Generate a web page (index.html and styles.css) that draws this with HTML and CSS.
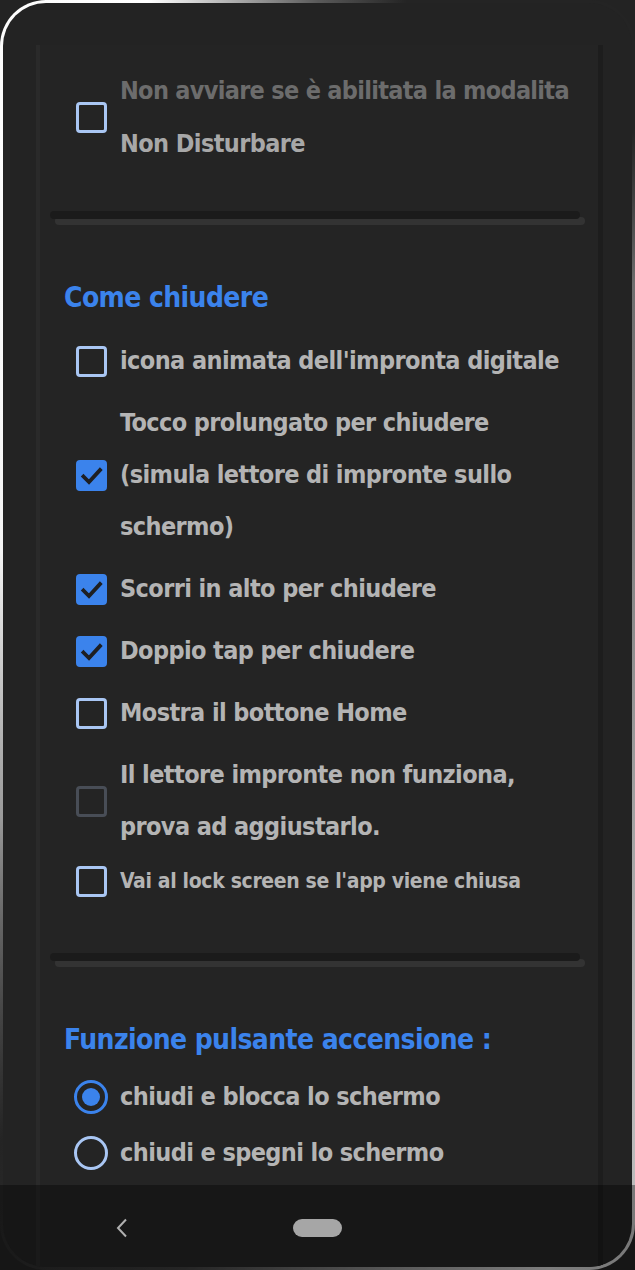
FILE: index.html
```html
<!DOCTYPE html>
<html lang="it">
<head>
<meta charset="utf-8">
<title>Impostazioni</title>
<link rel="stylesheet" href="styles.css">
</head>
<body>
<div class="device">
  <div class="screen">
    <div class="panel">
      <div class="row row--top">
        <span class="box"></span>
        <span class="label"><span class="dim">Non avviare se è abilitata la modalita</span><br>Non Disturbare</span>
      </div>

      <div class="divider"></div>

      <h2 class="title">Come chiudere</h2>
      <div class="options">
        <div class="row">
          <span class="box"></span>
          <span class="label">icona animata dell'impronta digitale</span>
        </div>
        <div class="row">
          <span class="box box--on"><svg viewBox="0 0 30 31" class="tick"><path d="M7 16.5 L12.5 22 L23.5 10"/></svg></span>
          <span class="label">Tocco prolungato per chiudere<br>(simula lettore di impronte sullo<br>schermo)</span>
        </div>
        <div class="row">
          <span class="box box--on"><svg viewBox="0 0 30 31" class="tick"><path d="M7 16.5 L12.5 22 L23.5 10"/></svg></span>
          <span class="label">Scorri in alto per chiudere</span>
        </div>
        <div class="row">
          <span class="box box--on"><svg viewBox="0 0 30 31" class="tick"><path d="M7 16.5 L12.5 22 L23.5 10"/></svg></span>
          <span class="label">Doppio tap per chiudere</span>
        </div>
        <div class="row">
          <span class="box"></span>
          <span class="label">Mostra il bottone Home</span>
        </div>
        <div class="row">
          <span class="box box--off"></span>
          <span class="label">Il lettore impronte non funziona,<br>prova ad aggiustarlo.</span>
        </div>
        <div class="row row--small">
          <span class="box"></span>
          <span class="label">Vai al lock screen se l'app viene chiusa</span>
        </div>
      </div>

      <div class="divider divider--second"></div>

      <h2 class="title">Funzione pulsante accensione :</h2>
      <div class="radios">
        <div class="radio-row">
          <span class="radio radio--on"><span class="dot"></span></span>
          <span class="label">chiudi e blocca lo schermo</span>
        </div>
        <div class="radio-row">
          <span class="radio"></span>
          <span class="label">chiudi e spegni lo schermo</span>
        </div>
      </div>
    </div>
  </div>
  <nav class="navbar">
    <svg class="back" viewBox="0 0 12 20"><path d="M10 1.5 L2 10 L10 18.5"/></svg>
    <span class="home-pill"></span>
  </nav>
</div>
</body>
</html>
```

FILE: styles.css
```css
* { box-sizing: border-box; }

html, body {
  margin: 0;
  padding: 0;
  background: #232323;
}

body {
  width: 635px;
  height: 1270px;
  overflow: hidden;
  font-family: "Liberation Sans Narrow", "DejaVu Sans Condensed", "Liberation Sans", sans-serif;
  font-weight: 700;
}

.device {
  position: relative;
  width: 635px;
  height: 1270px;
  padding: 3px;
  border-radius: 46px;
  background: conic-gradient(from 0deg at 50% 50%,
    #5a5a5a 0deg,
    #242424 8deg,
    #242424 32deg,
    #6e6e6e 42deg,
    #9a9a9a 110deg,
    #c4c4c4 160deg,
    #3a3a3a 192deg,
    #242424 212deg,
    #9a9a9a 240deg,
    #f4f4f4 285deg,
    #ffffff 345deg,
    #5a5a5a 360deg);
}

.screen {
  width: 100%;
  height: 100%;
  border-radius: 43px;
  background: #232323;
  overflow: hidden;
  padding-top: 42px;
}

.panel {
  margin-left: 33px;
  width: 567px;
  height: 100%;
  background: #242424;
  border-left: 4px solid #2a2a2a;
  border-right: 5px solid #1d1d1d;
  padding: 14px 0 0 24px;
  color: #b4b4b4;
}

.row {
  display: flex;
  align-items: center;
  padding: 5px 0 5px 12px;
}

.label {
  font-size: 25px;
  letter-spacing: -0.6px;
  line-height: 52px;
  margin-left: 13px;
  color: #b4b4b4;
  white-space: nowrap;
}

.row--top .label { line-height: 53px; color: #a8a8a8; }
.dim { color: #6c6c6c; letter-spacing: -0.7px; }

.row--small .label {
  font-size: 21px;
  letter-spacing: -0.35px;
  line-height: 36px;
}

.box {
  flex: none;
  width: 31px;
  height: 31px;
  border: 3px solid #a9c6f3;
  border-radius: 4px;
  display: flex;
}

.box--on {
  background: #3b83ec;
  border-color: #3b83ec;
}

.box--off {
  border-color: #484d56;
}

.tick {
  flex: none;
  margin: -3px;
  width: 31px;
  height: 31px;
}

.tick path {
  fill: none;
  stroke: #1e1f22;
  stroke-width: 3.8;
  stroke-linecap: square;
}

.divider {
  height: 8px;
  margin: 36px 18px 0 -14px;
  border-radius: 4px;
  background: #1b1b1b;
  box-shadow: 5px 6px 0 #333333;
}

.divider--second { margin-top: 49px; }

.title {
  margin: 59px 0 12px 0;
  font-size: 28px;
  letter-spacing: -0.6px;
  line-height: 40px;
  font-weight: 700;
  color: #3b83ec;
}

.radios { margin-top: -3px; }

.radio-row {
  display: flex;
  align-items: center;
  height: 56px;
  padding-left: 10px;
}

.radio-row .label { margin-left: 12px; line-height: 46px; }

.radio {
  flex: none;
  width: 34px;
  height: 34px;
  border-radius: 50%;
  border: 3.5px solid #a9c6f3;
  display: flex;
  align-items: center;
  justify-content: center;
}

.radio--on { border-color: #3b83ec; }

.dot {
  width: 18px;
  height: 18px;
  border-radius: 50%;
  background: #3b83ec;
}

.navbar {
  position: absolute;
  left: 0;
  right: 0;
  bottom: 0;
  height: 85px;
  background: rgba(0, 0, 0, 0.36);
  display: flex;
  align-items: center;
}

.back {
  width: 12px;
  height: 20px;
  margin-left: 116px;
}

.back path {
  fill: none;
  stroke: #b0b0b0;
  stroke-width: 2;
}

.home-pill {
  width: 49px;
  height: 18px;
  border-radius: 9px;
  background: #a6a6a6;
  margin-left: 165px;
}
```
